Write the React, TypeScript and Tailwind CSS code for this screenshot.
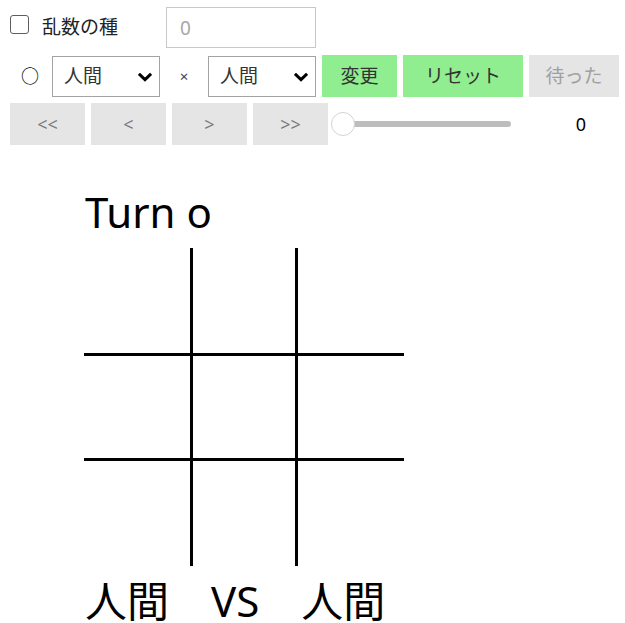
import { useState } from "react";

const font = "font-['Noto_Sans','Noto_Sans_CJK_JP',sans-serif]";

function Chevron() {
  return (
    <svg
      className="pointer-events-none absolute right-[8px] top-[17px]"
      width="14"
      height="9"
      viewBox="0 0 14 9"
      fill="none"
      stroke="black"
      strokeWidth={3}
      strokeLinecap="square"
    >
      <path d="M2 1.8 L7 6.6 L12 1.8" />
    </svg>
  );
}

function PlayerSelect() {
  return (
    <div className="relative h-[41px] w-[108px]">
      <select className="h-full w-full appearance-none border border-[#a3a3a3] bg-white pl-[11px] text-[19px] text-[#333] outline-none">
        <option>人間</option>
        <option>AI</option>
      </select>
      <Chevron />
    </div>
  );
}

export default function App() {
  const [step] = useState(0);
  const cells = Array.from({ length: 9 });

  return (
    <div className={`${font} min-h-[623px] w-[625px] bg-white pl-[10px] pt-[7px] text-[#222]`}>
      <div className="flex h-[41px] items-center">
        <div className="flex w-[156px] items-center">
          <input
            type="checkbox"
            className="mb-[7px] h-[19px] w-[19px] appearance-none rounded-[3px] border-[1.5px] border-[#5f5f5f] bg-white"
          />
          <span className="ml-[13px] text-[19px]">乱数の種</span>
        </div>
        <input
          placeholder="0"
          className="h-[41px] w-[150px] border border-[#c8c8c8] px-[13px] text-[19px] outline-none placeholder:text-[#a8a8a8]"
        />
      </div>

      <div className="mt-[7px] flex h-[42px] items-center">
        <span className="ml-[11px] w-[31px] text-[18px] leading-none text-black">○</span>
        <PlayerSelect />
        <span className="w-[48px] text-center text-[15px] text-[#444]">×</span>
        <PlayerSelect />
        <button className="ml-[6px] h-[42px] w-[75px] bg-[#90ee90] text-[19px] text-[#333]">変更</button>
        <button className="ml-[6px] h-[42px] w-[120px] bg-[#90ee90] text-[19px] text-[#333]">リセット</button>
        <button className="ml-[6px] h-[42px] w-[90px] bg-[#e5e5e5] text-[19px] text-[#a0a0a0]">待った</button>
      </div>

      <div className="mt-[6px] flex h-[42px] items-center">
        <div className="flex gap-[6px]">
          {["<<", "<", ">", ">>"].map((t) => (
            <button key={t} className="h-[42px] w-[75px] bg-[#e5e5e5] text-[18px] text-[#7a7a7a]">
              {t}
            </button>
          ))}
        </div>
        <div className="relative ml-[3px] flex h-[24px] w-[180px] items-center">
          <div className="ml-[12px] h-[6px] w-[168px] rounded-full bg-[#bdbdbd]" />
          <div className="absolute left-0 top-0 h-[24px] w-[24px] rounded-full border border-[#d4d4d4] bg-white" />
        </div>
        <span className="ml-[50px] w-[40px] text-center text-[18px] text-black">{step}</span>
      </div>

      <div className="ml-[75px] mt-[47px] text-[42px] leading-[40px] text-black">Turn o</div>

      <div className="ml-[74px] mt-[16px] grid w-[320px] grid-cols-[109px_105px_106px] grid-rows-[108px_105px_105px]">
        {cells.map((_, i) => {
          const col = i % 3;
          const row = Math.floor(i / 3);
          return (
            <div
              key={i}
              className={`border-black ${col < 2 ? "border-r-[3px]" : ""} ${row < 2 ? "border-b-[3px]" : ""}`}
            />
          );
        })}
      </div>

      <div className="ml-[75px] mt-[17px] whitespace-pre text-[42px] leading-[36px] text-black">人間　VS　人間</div>
    </div>
  );
}
